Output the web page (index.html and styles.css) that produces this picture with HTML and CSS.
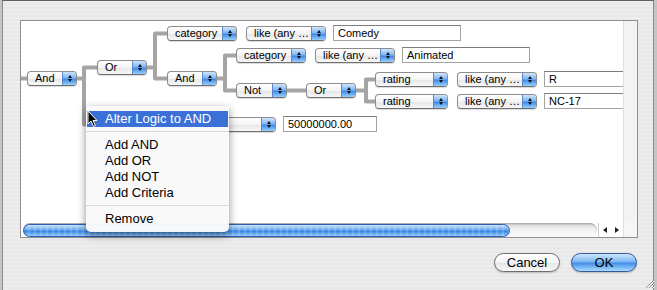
FILE: index.html
```html
<!DOCTYPE html>
<html lang="en">
<head>
    <meta charset="UTF-8">
    <title>Edit Predicate</title>
    <link rel="stylesheet" href="styles.css">
</head>
<body>
    <div class="sheet">
        <div class="scroll-view">
            <div class="canvas">
                <svg class="wires" width="602" height="201">
                    <path d="M0 57.5 H63 M76 46.5 H63 V103.5 H76
                             M126 46.5 H134 M146 12.5 H134 V57.5 H146
                             M196 57.5 H204 M215 34.5 H204 V69.5 H215
                             M266 69.5 H285
                             M335 69.5 H345 M354 58.5 H345 V80.5 H354"/>
                </svg>

                <div class="popup node n-and1"><span class="label">And</span><span class="arrows"><i class="up"></i><i class="down"></i></span></div>
                <div class="popup node n-or1"><span class="label">Or</span><span class="arrows"><i class="up"></i><i class="down"></i></span></div>
                <div class="popup node n-and2"><span class="label">And</span><span class="arrows"><i class="up"></i><i class="down"></i></span></div>
                <div class="popup node n-not"><span class="label">Not</span><span class="arrows"><i class="up"></i><i class="down"></i></span></div>
                <div class="popup node n-or2"><span class="label">Or</span><span class="arrows"><i class="up"></i><i class="down"></i></span></div>

                <div class="criteria row-cat1">
                    <div class="popup w-key"><span class="label">category</span><span class="arrows"><i class="up"></i><i class="down"></i></span></div>
                    <div class="popup w-op"><span class="label">like (any …</span><span class="arrows"><i class="up"></i><i class="down"></i></span></div>
                    <div class="field">Comedy</div>
                </div>
                <div class="criteria row-cat2">
                    <div class="popup w-key"><span class="label">category</span><span class="arrows"><i class="up"></i><i class="down"></i></span></div>
                    <div class="popup w-op"><span class="label">like (any …</span><span class="arrows"><i class="up"></i><i class="down"></i></span></div>
                    <div class="field">Animated</div>
                </div>
                <div class="criteria row-rat1">
                    <div class="popup w-rating"><span class="label">rating</span><span class="arrows"><i class="up"></i><i class="down"></i></span></div>
                    <div class="popup w-op"><span class="label">like (any …</span><span class="arrows"><i class="up"></i><i class="down"></i></span></div>
                    <div class="field wide">R</div>
                </div>
                <div class="criteria row-rat2">
                    <div class="popup w-rating"><span class="label">rating</span><span class="arrows"><i class="up"></i><i class="down"></i></span></div>
                    <div class="popup w-op"><span class="label">like (any …</span><span class="arrows"><i class="up"></i><i class="down"></i></span></div>
                    <div class="field wide">NC-17</div>
                </div>
                <!-- this row sits under the context menu, only its right end shows -->
                <div class="criteria row-rev">
                    <div class="popup w-key"><span class="label"></span><span class="arrows"><i class="up"></i><i class="down"></i></span></div>
                    <div class="popup w-cmp"><span class="label"></span><span class="arrows"><i class="up"></i><i class="down"></i></span></div>
                    <div class="field w-num">50000000.00</div>
                </div>
            </div>
            <div class="v-scroller"></div>
            <div class="h-scroller">
                <div class="track"><div class="thumb"></div></div>
                <div class="steppers"><span class="step left"></span><span class="step right"></span></div>
            </div>
            <div class="corner"></div>
        </div>

        <div class="footer">
            <button class="btn">Cancel</button>
            <button class="btn btn-ok">OK</button>
        </div>
    </div>

    <div class="menu">
        <div class="menu-item active">Alter Logic to AND</div>
        <div class="menu-sep"></div>
        <div class="menu-item">Add AND</div>
        <div class="menu-item">Add OR</div>
        <div class="menu-item">Add NOT</div>
        <div class="menu-item">Add Criteria</div>
        <div class="menu-sep"></div>
        <div class="menu-item">Remove</div>
    </div>

    <svg class="cursor" width="12" height="18" viewBox="0 0 12 18">
        <path d="M1 1 V14 L4 11 L6.5 16.5 L8.5 15.5 L6 10.5 H10 Z" fill="#000" stroke="#fff" stroke-width="1"/>
    </svg>

    <svg class="grip" width="11" height="11" viewBox="0 0 11 11">
        <path d="M10 2 L2 10 M10 5 L5 10 M10 8 L8 10" stroke="#8a8a8a" stroke-width="1"/>
        <path d="M10 3 L3 10 M10 6 L6 10 M10 9 L9 10" stroke="#fff" stroke-width="1"/>
    </svg>
</body>
</html>
```

FILE: styles.css
```css
:root {
    --wire: #a5a5a5;
    --aqua-blue: linear-gradient(#cfe4fc, #7fb6f4 45%, #3f8ae9 55%, #97cffd);
    --aqua-white: linear-gradient(#ffffff, #f4f4f4 50%, #e6e6e6 51%, #f7f7f7);
}

body { margin: 0; background: #c4c4c4; font-family: 'Liberation Sans', Arial, sans-serif; color: #000; }

.sheet { margin: 0 3px 0 2px; height: 290px; box-sizing: border-box; border: 1px solid #8a8a8a; border-top-color: #5e5e5e; border-bottom: none; padding: 19px 16px 0 17px;
         background: repeating-linear-gradient(#ededed 0 2px, #e8e8e8 2px 4px); }

.scroll-view { width: 618px; height: 218px; box-sizing: border-box; border: 1px solid #8e8e8e; display: grid; grid-template-columns: 602px 14px; grid-template-rows: 201px 15px; background: #fff; }
.canvas { position: relative; overflow: hidden; background: #fff; }
.wires { position: absolute; left: 0; top: 0; }
.wires path { fill: none; stroke: var(--wire); stroke-width: 4; stroke-linejoin: round; }
.v-scroller { background: #f3f3f3; border-left: 1px solid #e0e0e0; }
.corner { background: #f6f6f6; border-left: 1px solid #e0e0e0; }
.h-scroller { display: flex; align-items: center; background: #fff; }
.track { flex: 1; height: 14px; margin-left: 2px; border-radius: 7px; background: linear-gradient(#d2d2d2, #f0f0f0 40%, #fbfbfb); box-shadow: inset 0 1px 2px rgba(0,0,0,0.25); }
.thumb { width: 487px; height: 13px; margin-top: 1px; box-sizing: border-box; border: 1px solid #2c5fb5; border-radius: 7px;
         background: repeating-linear-gradient(90deg, rgba(255,255,255,0) 0 4px, rgba(255,255,255,0.15) 4px 6px), linear-gradient(#c8e2fd, #6aa9ef 45%, #3584e4 55%, #92cbfa); }
.steppers { width: 24px; height: 14px; display: flex; align-items: center; justify-content: space-around; border-left: 1px solid #ccc; margin-left: 1px; }
.step { width: 0; height: 0; border-top: 3px solid transparent; border-bottom: 3px solid transparent; }
.step.left { border-right: 4px solid #222; }
.step.right { border-left: 4px solid #222; }

.node, .criteria { position: absolute; }
.criteria { display: flex; align-items: center; gap: 9px; }

.popup { display: flex; align-items: center; height: 15px; box-sizing: border-box; border: 1px solid #8d8d8d; border-bottom-color: #6f6f6f; border-radius: 4px; background: var(--aqua-white); font-size: 11px; overflow: hidden; box-shadow: 0 1px 1px rgba(0,0,0,0.15); width: 50px; }
.popup .label { flex: 1; padding-left: 7px; white-space: nowrap; overflow: hidden; line-height: 13px; }
.popup .arrows { width: 14px; height: 100%; box-sizing: border-box; border-left: 1px solid #5d86c6; background: var(--aqua-blue); display: flex; flex-direction: column; align-items: center; justify-content: center; gap: 1px; }
.arrows i { width: 0; height: 0; border-left: 2px solid transparent; border-right: 2px solid transparent; }
.arrows .up { border-bottom: 3px solid #111; }
.arrows .down { border-top: 3px solid #111; }

.n-and1 { left: 6px; top: 50px; }
.n-or1 { left: 76px; top: 39px; }
.n-and2 { left: 146px; top: 50px; }
.n-not { left: 215px; top: 62px; width: 51px; }
.n-or2 { left: 285px; top: 62px; }
.row-cat1 { left: 146px; top: 4px; }
.row-cat2 { left: 215px; top: 26px; }
.row-rat1 { left: 354px; top: 50px; }
.row-rat2 { left: 354px; top: 72px; }
.row-rev { left: 76px; top: 95px; }

.w-key { width: 70px; }
.w-op { width: 80px; }
.w-rating { width: 73px; }
.w-cmp { width: 100px; }

.field { margin-left: -2px; width: 128px; height: 16px; box-sizing: border-box; border: 1px solid #a3a3a3; border-top-color: #7c7c7c; background: #fff; font-size: 11px; line-height: 14px; padding-left: 4px; }
.field.wide { width: 110px; }
.field.w-num { width: 94px; }

.footer { display: flex; justify-content: flex-end; gap: 11px; margin-top: 15px; }
.btn { width: 66px; height: 19px; padding: 0; border-radius: 10px; box-sizing: border-box; border: 1px solid #6f6f6f; background: var(--aqua-white); font: 13px 'Liberation Sans', Arial, sans-serif; line-height: 17px; color: #000; box-shadow: 0 1px 2px rgba(0,0,0,0.2); }
.btn-ok { border-color: #35589a; background: linear-gradient(#cfe6fd, #78b4f2 48%, #3f8be6 52%, #a9ddff); }

.menu { position: absolute; left: 86px; top: 106px; width: 143px; padding: 5px 0; box-sizing: border-box; background: rgba(249,249,249,0.97); border-radius: 0 0 5px 5px; box-shadow: 0 3px 9px rgba(0,0,0,0.45); font-size: 13px; }
.menu-item { height: 16px; line-height: 16px; padding-left: 19px; white-space: nowrap; }
.menu-item.active { margin: 0 1px; padding-left: 18px; background: #3b70d6; color: #fff; }
.menu-sep { height: 1px; margin: 4px 0 5px; background: #d9d9d9; }

.cursor { position: absolute; left: 87px; top: 110px; }
.grip { position: absolute; left: 644px; top: 278px; }
```
